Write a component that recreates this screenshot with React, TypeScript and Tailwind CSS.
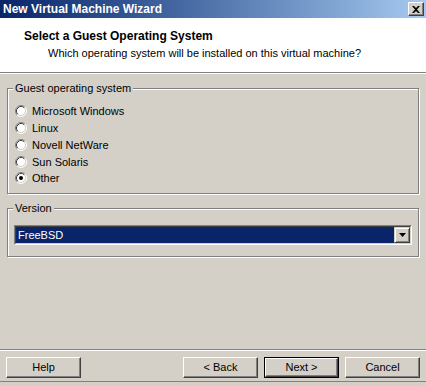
import React from 'react';

const OPTIONS = ['Microsoft Windows', 'Linux', 'Novell NetWare', 'Sun Solaris', 'Other'];

function Radio({ checked }: { checked: boolean }) {
  return (
    <svg width="12" height="12" viewBox="0 0 12 12" className="shrink-0">
      <circle cx="6" cy="6" r="5" fill="#fff" />
      <path d="M2.11 9.89 A5.5 5.5 0 0 1 9.89 2.11" stroke="#808080" strokeWidth="1" fill="none" />
      <path d="M9.89 2.11 A5.5 5.5 0 0 1 2.11 9.89" stroke="#fff" strokeWidth="1" fill="none" />
      <path d="M2.82 9.18 A4.5 4.5 0 0 1 9.18 2.82" stroke="#404040" strokeWidth="1" fill="none" />
      <path d="M9.18 2.82 A4.5 4.5 0 0 1 2.82 9.18" stroke="#d4d0c8" strokeWidth="1" fill="none" />
      {checked && <circle cx="6" cy="6" r="2" fill="#000" />}
    </svg>
  );
}

function GroupBox({ label, className, children }: { label: string; className: string; children: React.ReactNode }) {
  return (
    <div className={`relative mx-[7px] border border-[#808080] shadow-[inset_1px_1px_0_#fff,1px_1px_0_#fff] ${className}`}>
      <span className="absolute left-[5px] top-[-8px] bg-[#d4d0c8] px-[2px] leading-[14px]">{label}</span>
      {children}
    </div>
  );
}

function Button({ label, def = false }: { label: string; def?: boolean }) {
  return (
    <div className={`w-[75px] h-[21px] ${def ? 'border border-black' : ''}`}>
      <div className="h-full w-full border-t border-l border-white border-r border-b border-r-[#404040] border-b-[#404040] shadow-[inset_-1px_-1px_0_#808080] flex items-center justify-center">
        {label}
      </div>
    </div>
  );
}

export default function App() {
  return (
    <div
      className="w-[426px] h-[386px] bg-[#d4d0c8] flex flex-col text-[11px] text-black overflow-hidden"
      style={{ fontFamily: '"Liberation Sans", Arial, sans-serif' }}
    >
      {/* Title bar */}
      <div className="h-[18px] flex items-center justify-between pl-[3px] pr-[2px] bg-gradient-to-r from-[#0a246a] to-[#a6caf0]">
        <span className="text-white font-bold text-[12px] leading-[14px]">New Virtual Machine Wizard</span>
        <div className="w-[16px] h-[14px] bg-[#d4d0c8] border-t border-l border-white border-r border-b border-r-[#404040] border-b-[#404040] shadow-[inset_-1px_-1px_0_#808080] flex items-center justify-center">
          <svg width="8" height="7" viewBox="0 0 8 7">
            <path d="M0 0 L2 0 L4 2 L6 0 L8 0 L5 3.5 L8 7 L6 7 L4 5 L2 7 L0 7 L3 3.5 Z" fill="#000" />
          </svg>
        </div>
      </div>

      {/* Header */}
      <div className="h-[55px] bg-white border-b border-[#808080] shadow-[0_1px_0_#fff] pt-[11px]">
        <div className="pl-[24px] font-bold text-[12px] leading-[14px]">Select a Guest Operating System</div>
        <div className="pl-[48px] mt-[3px] leading-[14px]">Which operating system will be installed on this virtual machine?</div>
      </div>

      {/* Guest OS group */}
      <GroupBox label="Guest operating system" className="mt-[15px] h-[106px]">
        <div className="flex flex-col pt-[14px] pl-[7px]">
          {OPTIONS.map((o) => (
            <div key={o} className="h-[16.75px] flex items-center gap-[5px]">
              <Radio checked={o === 'Other'} />
              <span className="leading-[14px]">{o}</span>
            </div>
          ))}
        </div>
      </GroupBox>

      {/* Version group */}
      <GroupBox label="Version" className="mt-[14px] h-[49px]">
        <div className="mt-[16px] mx-[6px] h-[20px] border border-t-[#808080] border-l-[#808080] border-r-white border-b-white">
          <div className="h-full border border-t-[#404040] border-l-[#404040] border-r-[#d4d0c8] border-b-[#d4d0c8] bg-white flex">
            <div className="flex-1 bg-[#0a246a] text-white flex items-center pl-[2px] leading-[14px]">FreeBSD</div>
            <div className="w-[16px] bg-[#d4d0c8] border-t border-l border-[#d4d0c8] border-r border-b border-r-[#404040] border-b-[#404040] shadow-[inset_1px_1px_0_#fff,inset_-1px_-1px_0_#808080] flex items-center justify-center">
              <svg width="7" height="4" viewBox="0 0 7 4">
                <path d="M0 0 H7 L3.5 4 Z" fill="#000" />
              </svg>
            </div>
          </div>
        </div>
      </GroupBox>

      <div className="flex-1" />

      {/* Bottom bar */}
      <div className="h-[2px] border-t border-[#808080] border-b border-b-white" />
      <div className="h-[30px] flex items-start pt-[6px] px-[6px]">
        <Button label="Help" />
        <div className="flex-1" />
        <div className="flex gap-[6px]">
          <Button label="< Back" />
          <Button label="Next >" def />
          <Button label="Cancel" />
        </div>
      </div>
      <div className="h-[5px] border-t border-[#808080]" />
    </div>
  );
}
